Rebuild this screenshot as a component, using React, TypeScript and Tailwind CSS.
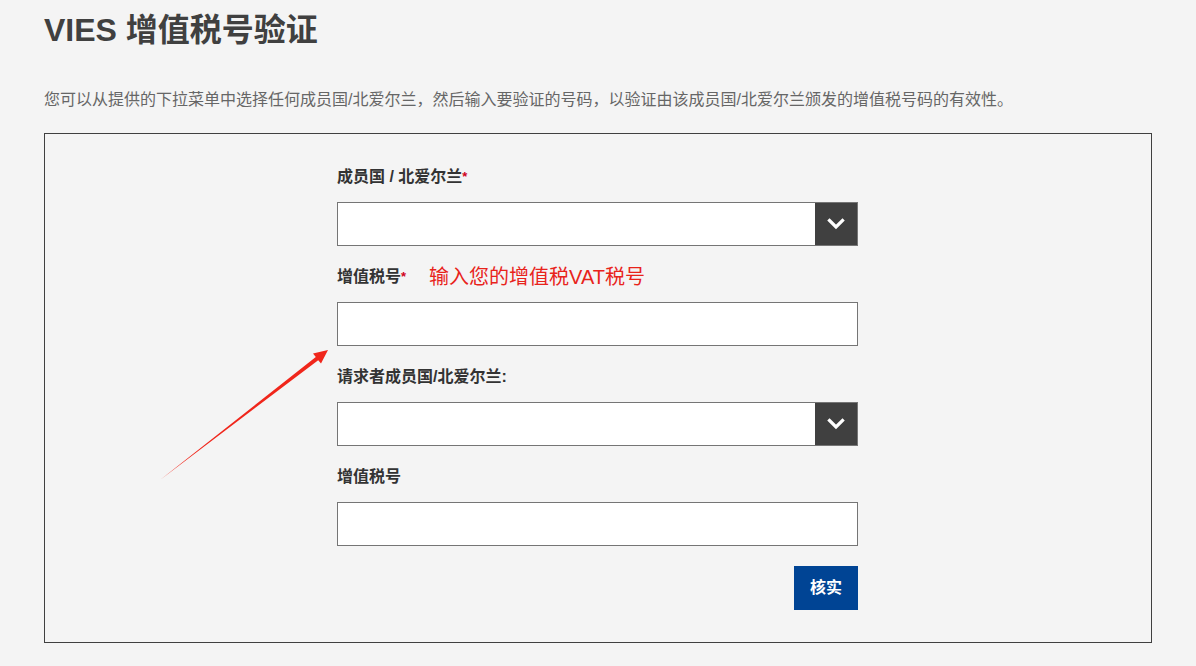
import React from "react";

const font = { fontFamily: '"Liberation Sans", Arial, "Noto Sans CJK SC", sans-serif' };

function Chevron() {
  return (
    <svg width="18" height="12" viewBox="0 0 18 12" fill="none">
      <path d="M2.5 2.5 L9 9 L15.5 2.5" stroke="#ffffff" strokeWidth="3.2" strokeLinecap="square" />
    </svg>
  );
}

function SelectBox() {
  return (
    <div className="mt-[14px] h-[44px] w-full flex border border-[#757575] bg-white">
      <div className="flex-1" />
      <div className="w-[42px] h-full bg-[#404040] flex items-center justify-center">
        <Chevron />
      </div>
    </div>
  );
}

function InputBox() {
  return <div className="mt-[14px] h-[44px] w-full border border-[#757575] bg-white" />;
}

function Label({ children, req, extra }: { children: React.ReactNode; req?: boolean; extra?: React.ReactNode }) {
  return (
    <div className="h-[22px] flex items-center text-[16px] font-bold text-[#333333] leading-[22px]">
      <span>{children}</span>
      {req && <span className="text-[#d0021b] text-[13px] self-start font-bold">*</span>}
      {extra}
    </div>
  );
}

export default function App() {
  return (
    <div className="relative w-[1196px] h-[666px] bg-[#f4f4f4] px-[44px] overflow-hidden" style={font}>
      <h1 className="pt-[10px] text-[32px] leading-[40px] font-bold text-[#404040]">VIES 增值税号验证</h1>
      <p className="mt-[38px] text-[16px] leading-[24px] text-[#666666]">
        您可以从提供的下拉菜单中选择任何成员国/北爱尔兰，然后输入要验证的号码，以验证由该成员国/北爱尔兰颁发的增值税号码的有效性。
      </p>
      <div className="mt-[21px] w-[1108px] h-[510px] border border-[#404040]">
        <div className="ml-[292px] w-[521px] pt-[32px] flex flex-col">
          <Label req>成员国 / 北爱尔兰</Label>
          <SelectBox />
          <div className="mt-[20px]">
            <Label
              req
              extra={
                <span className="ml-[23px] text-[20px] font-normal text-[#e8231b]">输入您的增值税VAT税号</span>
              }
            >
              增值税号
            </Label>
          </div>
          <InputBox />
          <div className="mt-[20px]">
            <Label>请求者成员国/北爱尔兰:</Label>
          </div>
          <SelectBox />
          <div className="mt-[20px]">
            <Label>增值税号</Label>
          </div>
          <InputBox />
          <div className="mt-[20px] flex justify-end">
            <button className="w-[64px] h-[44px] bg-[#004494] text-white text-[16px] font-bold">核实</button>
          </div>
        </div>
      </div>
      <svg
        className="absolute left-0 top-0 pointer-events-none"
        width="1196"
        height="666"
        viewBox="0 0 1196 666"
      >
        <polygon
          points="160,480 315.8,357 313,353.5 328,350 321,363.6 318.2,360.2"
          fill="#f0261b"
        />
      </svg>
    </div>
  );
}
